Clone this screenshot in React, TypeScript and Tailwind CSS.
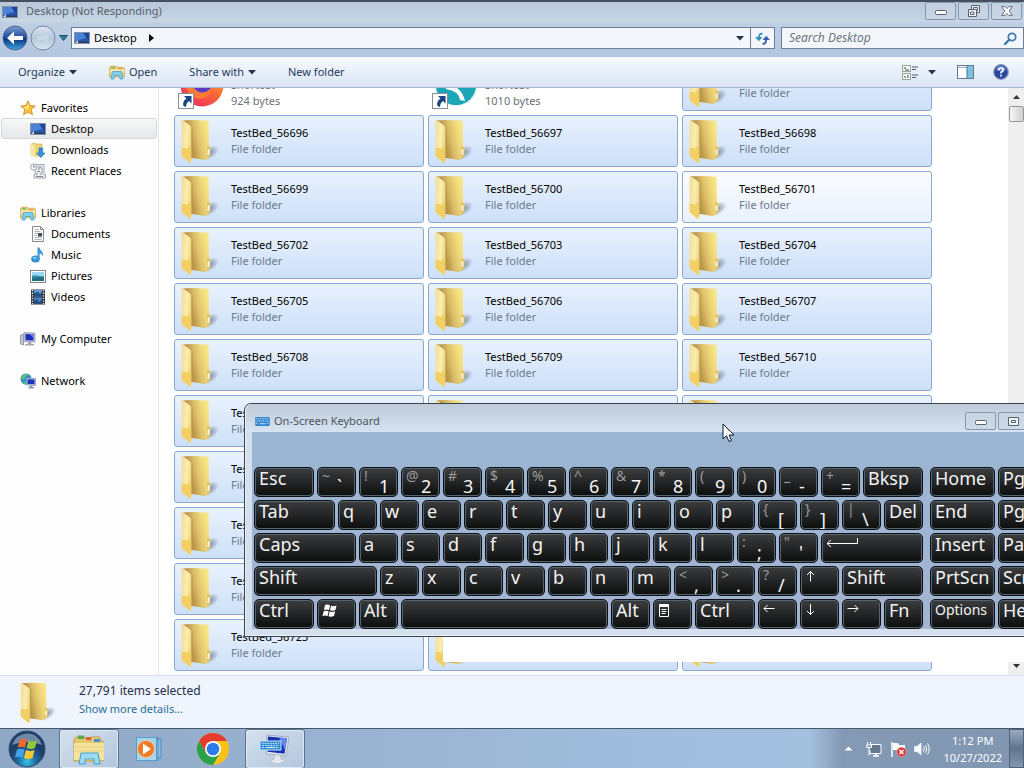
import React from 'react';
import clsx from 'clsx';

interface KeyDef {
  id: string;
  span: string;
  label?: string;
  shift?: string;
  icon?: React.ReactNode;
}

/* ---------- icons ---------- */

function MonitorIcon() {
  return (
    <svg width="16" height="16" viewBox="0 0 16 16" className="shrink-0">
      <rect x="0.5" y="2.5" width="15" height="11" fill="#2858b0" stroke="#8494ad" />
      <path d="M1 3h14v4L1 11z" fill="#4d83d6" />
      <path d="M9 3h6v8z" fill="#1d449a" />
      <path d="M1 11.5h14V13H1z" fill="#2b3c5c" />
      <path d="M1 13l3-3v3z" fill="#d6e2f2" />
    </svg>
  );
}

function StarIcon() {
  return (
    <svg width="16" height="16" viewBox="0 0 16 16" className="shrink-0">
      <path
        d="M8 .8l2 4.8 5.2.4-4 3.500 1.300 5.200L8 11.900l-4.500 2.800 1.300-5.200-4-3.500L6 5.600z"
        fill="#fcc23c"
        stroke="#d98a2b"
        strokeWidth="0.9"
      />
      <path d="M8 3l1.200 3.400-2 3-4-2.500L7 6.400z" fill="#ffe98c" />
    </svg>
  );
}

function DownloadsIcon() {
  return (
    <svg width="16" height="16" viewBox="0 0 16 16" className="shrink-0">
      <path d="M1 2l4-1 1 1h6v12H5l-4-1z" fill="#efd178" stroke="#d0a94c" strokeWidth="0.6" />
      <path d="M1 2l4 1.500V15l-4-2z" fill="#f9e7a6" />
      <path d="M9 6h3.600v5H15l-4.200 4.600L6.600 11H9z" fill="#2f93dc" stroke="#1b6db2" strokeWidth="0.6" />
    </svg>
  );
}

function RecentIcon() {
  return (
    <svg width="16" height="16" viewBox="0 0 16 16" className="shrink-0">
      <path d="M5 1.500h9v10h1.500V15H4v-3h1z" fill="#e9edf0" stroke="#8c959c" strokeWidth="0.8" />
      <path d="M8 4h4M8 6h2M11 6h2M7 8.500h3M11 9h2M6 11h2M10 11h2M6 13.500h7" stroke="#7f8a92" />
      <circle cx="3.800" cy="4" r="3.200" fill="#f5f7f8" stroke="#8c959c" strokeWidth="0.8" />
      <path d="M3.800 2v2h1.700" stroke="#59636a" strokeWidth="0.8" fill="none" />
    </svg>
  );
}

function LibraryIcon() {
  return (
    <svg width="16" height="16" viewBox="0 0 16 16" className="shrink-0">
      <path d="M.5 3.500L2 2h5l1 1.200h6.500L15.500 5v8H.5z" fill="#ecd27c" stroke="#c9a657" strokeWidth="0.7" />
      <path d="M2 3h4v1.500H2z" fill="#7cbf5b" />
      <path d="M9 4h4v1.200H9z" fill="#e88f55" />
      <path d="M.8 5.500h14.400v3H.8z" fill="#f8e9ab" />
      <path d="M2 15l1.500-7.500h9L14 15h-3l-.5-3.500h-5L5 15z" fill="#7fd0ea" stroke="#3d9cc4" strokeWidth="0.7" />
    </svg>
  );
}

function DocumentIcon() {
  return (
    <svg width="16" height="16" viewBox="0 0 16 16" className="shrink-0">
      <path d="M2.500.5h8l3 3v12h-11z" fill="#fbfbfb" stroke="#868d92" />
      <path d="M10.500.5v3h3" fill="none" stroke="#868d92" />
      <path d="M4.500 3.500h4M4.500 5.500h6M4.500 7.500h3M4.500 9.500h3M4.500 11.500h7M4.500 13.500h7" stroke="#9ca3a8" strokeWidth="0.8" />
      <rect x="8" y="7" width="4" height="3.500" fill="#454e55" />
    </svg>
  );
}

function MusicIcon() {
  return (
    <svg width="16" height="16" viewBox="0 0 16 16" className="shrink-0">
      <ellipse cx="5.500" cy="12" rx="4.300" ry="3.600" fill="#3093d6" />
      <ellipse cx="4.800" cy="11" rx="2" ry="1.300" fill="#7cc4f1" />
      <path d="M7.500 12V.5h2C10 4 14 4.500 13 10c-.4-2.200-1.500-3.300-3.400-3.600V12z" fill="#3a97d8" />
    </svg>
  );
}

function PicturesIcon() {
  return (
    <svg width="16" height="16" viewBox="0 0 16 16" className="shrink-0">
      <rect x="0.5" y="2.5" width="15" height="12" fill="#fff" stroke="#7c868d" />
      <rect x="2" y="4" width="12" height="9" fill="#9bd6f1" />
      <path d="M2 8c4-1.500 7 1 12 0v5H2z" fill="#2f8c9c" />
      <path d="M2 10c4 1 8-1.500 12 0v3H2z" fill="#206c80" />
    </svg>
  );
}

function VideosIcon() {
  return (
    <svg width="16" height="16" viewBox="0 0 16 16" className="shrink-0">
      <rect x="1" y="0.500" width="14" height="15" fill="#2c3238" />
      <path d="M2.500 1v14M13.500 1v14" stroke="#e8ecef" strokeWidth="1.400" strokeDasharray="1.300 1.300" />
      <rect x="4" y="1" width="8" height="6.500" fill="#5f9bd4" />
      <rect x="4" y="8.500" width="8" height="6.500" fill="#4b86c4" />
      <path d="M4 4l4-1 2 2 2-2v4.500H4zM4 12l3-2 2 3 3-3v5H4z" fill="#25507f" />
    </svg>
  );
}

function ComputerIcon() {
  return (
    <svg width="16" height="16" viewBox="0 0 16 16" className="shrink-0">
      <path d="M.5 4l3-1v11l-3-1z" fill="#c3c7cf" stroke="#7b818b" strokeWidth="0.7" />
      <path d="M4 1.500l11 .5v9L4 10.500z" fill="#c6cad8" stroke="#878da3" strokeWidth="0.700" />
      <path d="M5.500 3l8 .3v6.200l-8-.3z" fill="#1a2ebc" />
      <path d="M10 3.200l3.500.1v4z" fill="#6f86ef" />
      <path d="M8 11h3l.5 2H14v1.500H5V13h2.700z" fill="#a5a9b5" />
    </svg>
  );
}

function NetworkIcon() {
  return (
    <svg width="16" height="16" viewBox="0 0 16 16" className="shrink-0">
      <circle cx="6" cy="6" r="5.500" fill="#2f8bd0" />
      <path d="M2 3c2-2 5-2.500 6-2 0 2-3 2-3 4S2 7 1 5zM3 8l3 1v2.400C4 11 3 10 3 8z" fill="#5cc06c" />
      <path d="M6.500 5l9 .5v7l-9-.5z" fill="#ccd2e0" stroke="#7c88a8" strokeWidth="0.700" />
      <path d="M7.500 6.200l7 .3v4.800l-7-.3z" fill="#1a35bd" />
      <path d="M10 12.500h2l.5 1.500h1.500v1.500H8.500V14H10z" fill="#8d97ad" />
    </svg>
  );
}

function FolderIcon({ size = 'tile' }: { size?: 'tile' | 'details' }) {
  return (
    <svg
      width={size === 'tile' ? 40 : 38}
      height={size === 'tile' ? 46 : 43}
      viewBox="0 0 40 46"
      className="shrink-0"
    >
      <defs>
        <linearGradient id={`back-${size}`} gradientUnits="userSpaceOnUse" x1="11" x2="29" y1="24" y2="20">
          <stop offset="0" stopColor="#b8964a" />
          <stop offset="0.350" stopColor="#dbbc66" />
          <stop offset="0.700" stopColor="#eed57a" />
          <stop offset="1" stopColor="#f6e583" />
        </linearGradient>
        <linearGradient id={`front-${size}`} x1="0" x2="1" y2="0.300">
          <stop offset="0" stopColor="#f0dc93" />
          <stop offset="0.600" stopColor="#faedb2" />
          <stop offset="1" stopColor="#eed577" />
        </linearGradient>
        <radialGradient id={`shade-${size}`}>
          <stop offset="0" stopColor="#54606f" stopOpacity="0.700" />
          <stop offset="1" stopColor="#54606f" stopOpacity="0" />
        </radialGradient>
      </defs>
      <ellipse cx="29" cy="35" rx="11" ry="6" fill={`url(#shade-${size})`} transform="rotate(-30 29 35)" />
      <path d="M3 2.500l8-.5 16 .5q1.500 0 1.500 1.500l.5 23-1 13.500-3 1.500-13-2z" fill={`url(#back-${size})`} />
      <path d="M27 28q3.500 0 3.500 3v5q0 3-3.500 4z" fill="#e6c65f" />
      <path d="M28.500 31.500v5" stroke="#fff" strokeWidth="1.600" />
      <path d="M1.500 3q0-1.500 2-.7l7.500 5.200q.8.700.8 2V40l-1.500 5-7.300-5.500q-1.500-1-1.500-3z" fill={`url(#front-${size})`} />
      <path d="M1.500 30q4-1 5 1l4-3 1.300 2v10l-1.500 5-7.300-5.500q-1.500-1-1.500-3z" fill="#f1cf66" />
      <path d="M3.500 2.300l7.500 5.200q.8.700.8 2V40" fill="none" stroke="#a98b42" strokeWidth="0.700" />
    </svg>
  );
}

function ShortcutArrow() {
  return (
    <g>
      <rect x="0.500" y="28.500" width="15" height="15" fill="#fff" stroke="#8a8f96" />
      <path d="M6 31h7.500v7.500L11 36q-3 2-3 6l-2.500-1q-1.500-4.500 3-7.500z" fill="#1b4385" />
    </g>
  );
}

function FirefoxIcon() {
  return (
    <svg width="46" height="44" viewBox="0 0 46 44" className="mt-1 shrink-0">
      <defs>
        <linearGradient id="firefox" x1="0.900" x2="0.200" y2="1">
          <stop offset="0" stopColor="#fcca3f" />
          <stop offset="0.500" stopColor="#fb6a35" />
          <stop offset="1" stopColor="#ec2a60" />
        </linearGradient>
      </defs>
      <circle cx="24" cy="20" r="21.500" fill="url(#firefox)" />
      <circle cx="24" cy="19" r="10" fill="#5b3ac4" />
      <path d="M7 20q6 3 8 2 9 11 19 0-2 12-12 12T7 20z" fill="#fb7a35" />
      <ShortcutArrow />
    </svg>
  );
}

function AppIcon() {
  return (
    <svg width="46" height="44" viewBox="0 0 46 44" className="mt-1 shrink-0">
      <circle cx="24" cy="20" r="21.500" fill="#dcefF0" />
      <circle cx="24" cy="20" r="20" fill="#1ba6b5" />
      <path d="M14 18q16 4 19 18l-5-1q-1-9-14-11z" fill="#fff" />
      <ShortcutArrow />
    </svg>
  );
}

function OskIcon() {
  return (
    <svg width="15" height="9" viewBox="0 0 16 10" className="mt-[6px] shrink-0">
      <rect width="16" height="10" fill="#2f86cf" />
      <path d="M1 2h14M1.500 4.500h13M1 7h2M13 7h2" stroke="#d8ecfb" strokeDasharray="1.300 1" strokeWidth="1.200" />
      <path d="M4.500 7.500h7" stroke="#d8ecfb" />
    </svg>
  );
}

function MinimizeIcon() {
  return (
    <svg width="12" height="6" viewBox="0 0 12 6" className="mt-1">
      <rect x="0.5" y="0.5" width="11" height="4" rx="1" fill="#f7f9fb" stroke="#566270" />
    </svg>
  );
}

function RestoreIcon() {
  return (
    <svg width="12" height="12" viewBox="0 0 12 12" fill="#eef3f8" stroke="#566270">
      <path d="M3.500.5h8v7h-8z" />
      <path d="M5.500 2.500h4v3h-4z" />
      <path d="M.5 4.500h8v7h-8z" />
      <path d="M2.500 7h3.500v2.500H2.500z" />
    </svg>
  );
}

function MaximizeIcon() {
  return (
    <svg width="11" height="9" viewBox="0 0 11 9" fill="#eef3f8" stroke="#566270">
      <path d="M.5.5h10v8H.5z" />
      <path d="M3.500 3.500h4v2h-4z" />
    </svg>
  );
}

function CloseIcon() {
  return (
    <svg width="12" height="10" viewBox="0 0 12 10">
      <path
        d="M.7.600h3.500L6 2.600 7.800.600h3.500L8.200 5l3.100 4.400H7.800L6 7.400 4.200 9.400H.7L3.800 5z"
        fill="#fff"
        stroke="#566270"
        strokeWidth="0.900"
      />
    </svg>
  );
}

function DownArrow() {
  return (
    <svg width="8" height="5" viewBox="0 0 8 5" className="shrink-0">
      <path d="M0 0h8L4 4.500z" fill="#25324a" />
    </svg>
  );
}

function WindowsFlag() {
  return (
    <svg width="16" height="14" viewBox="0 0 16 14" fill="#fff">
      <path d="M3 1q2.500-1 5 .3L7 6Q4.500 5 2 6zM9 1.700q2.500 1 5.500-.2L13.500 6Q11 7.200 8 6.300zM1.700 7.200Q4.200 6.200 6.700 7.200L5.600 12Q3 10.800.5 12zM7.700 7.500q2.500 1 5.500-.2L12 12q-3 1.300-5.500.3z" />
    </svg>
  );
}

function MenuKeyIcon() {
  return (
    <svg width="12" height="14" viewBox="0 0 12 14" fill="none" stroke="#fff">
      <path d="M1.500 .500h9v12h-9z" />
      <path d="M1 2h10" strokeWidth="2" />
      <path d="M3.500 5.500h5M3.500 7.500h5M3.500 9.500h4" />
    </svg>
  );
}

function ArrowIcon({ d, wide }: { d: string; wide?: boolean }) {
  return (
    <svg width={wide ? 32 : 12} height="12" viewBox={wide ? '0 0 32 12' : '0 0 12 12'} fill="none" stroke="#fff">
      <path d={d} />
    </svg>
  );
}

/* ---------- data ---------- */

const favorites = [
  { name: 'Desktop', icon: <MonitorIcon />, active: true },
  { name: 'Downloads', icon: <DownloadsIcon /> },
  { name: 'Recent Places', icon: <RecentIcon /> },
];

const libraries = [
  { name: 'Documents', icon: <DocumentIcon /> },
  { name: 'Music', icon: <MusicIcon /> },
  { name: 'Pictures', icon: <PicturesIcon /> },
  { name: 'Videos', icon: <VideosIcon /> },
];

const folders = Array.from({ length: 31 }, (_, i) => `TestBed_${56695 + i}`);

const one = 'col-span-2';

const chars = (pairs: string[]): KeyDef[] =>
  pairs.map((p) => ({
    id: p,
    span: one,
    label: p[p.length - 1],
    shift: p.length > 1 ? p[0] : undefined,
  }));

const mainKeys: KeyDef[] = [
  { id: 'esc', label: 'Esc', span: 'col-span-3' },
  ...chars(['~`', '!1', '@2', '#3', '$4', '%5', '^6', '&7', '*8', '(9', ')0', '_-', '+=']),
  { id: 'bksp', label: 'Bksp', span: 'col-span-3' },
  { id: 'tab', label: 'Tab', span: 'col-span-4' },
  ...chars(['q', 'w', 'e', 'r', 't', 'y', 'u', 'i', 'o', 'p', '{[', '}]', '|\\']),
  { id: 'del', label: 'Del', span: one },
  { id: 'caps', label: 'Caps', span: 'col-span-5' },
  ...chars(['a', 's', 'd', 'f', 'g', 'h', 'j', 'k', 'l', ':;', '"\'']),
  { id: 'enter', icon: <ArrowIcon wide d="M1 5.500h30.500V0M5 2L1 5.500 5 9" />, span: 'col-span-5' },
  { id: 'lshift', label: 'Shift', span: 'col-span-6' },
  ...chars(['z', 'x', 'c', 'v', 'b', 'n', 'm', '<,', '>.', '?/']),
  { id: 'up', icon: <ArrowIcon d="M5.500 0v10.500M2 4L5.500.500 9 4" />, span: one },
  { id: 'rshift', label: 'Shift', span: 'col-span-4' },
  { id: 'lctrl', label: 'Ctrl', span: 'col-span-3' },
  { id: 'win', icon: <WindowsFlag />, span: one },
  { id: 'lalt', label: 'Alt', span: one },
  { id: 'space', label: '', span: 'col-span-10' },
  { id: 'ralt', label: 'Alt', span: one },
  { id: 'menu', icon: <MenuKeyIcon />, span: one },
  { id: 'rctrl', label: 'Ctrl', span: 'col-span-3' },
  { id: 'left', icon: <ArrowIcon d="M11.500 4.500H1M4.500 1L1 4.500 4.500 8" />, span: one },
  { id: 'down', icon: <ArrowIcon d="M5.500 0v10.500M2 7l3.500 3.500L9 7" />, span: one },
  { id: 'right', icon: <ArrowIcon d="M.5 4.500H11M7.500 1L11 4.500 7.500 8" />, span: one },
  { id: 'fn', label: 'Fn', span: one },
];

const sideKeys = ['Home', 'PgUp', 'End', 'PgDn', 'Insert', 'Pause', 'PrtScn', 'ScrLk', 'Options', 'Help'];

/* ---------- pieces ---------- */

function CaptionButton({ label, children }: { label: string; children: React.ReactNode }) {
  return (
    <button
      aria-label={label}
      className="flex h-[18px] w-[31px] items-center justify-center rounded-[2px] border border-[#8497ae] bg-[#c9d6e5]/60"
    >
      {children}
    </button>
  );
}

function NavRow({ name, icon, child, active }: { name: string; icon: React.ReactNode; child?: boolean; active?: boolean }) {
  return (
    <a
      href="#"
      className={clsx(
        'mx-px flex h-[21px] items-center gap-[5px] rounded-[3px] border text-black',
        child ? 'pl-7' : 'pl-[18px]',
        active ? 'border-[#d6d8da] bg-linear-to-b from-[#f7f8f8] to-[#e6e7e8]' : 'border-transparent'
      )}
    >
      {icon}
      {name}
    </a>
  );
}

function FolderTile({ name, light }: { name: string; light?: boolean }) {
  return (
    <div
      className={clsx(
        'flex h-[52px] items-center gap-[11px] rounded-[3px] border bg-linear-to-b pl-[5px]',
        light ? 'border-[#8eaacd] from-[#fafcff] to-[#e9f1fc]' : 'border-[#86a8d3] from-[#e9f1fc] to-[#cde0fa]'
      )}
    >
      <FolderIcon />
      <div className="flex flex-col">
        <span className="text-black">{name}</span>
        <span className="text-[#6b7a8d]">File folder</span>
      </div>
    </div>
  );
}

function ShortcutTile({ icon, size }: { icon: React.ReactNode; size: string }) {
  return (
    <div className="flex h-[52px] items-center gap-[7px] pl-1">
      {icon}
      <div className="flex flex-col pt-4 text-[#6d7278]">
        <span>Shortcut</span>
        <span>{size}</span>
      </div>
    </div>
  );
}

function Key({ k }: { k: KeyDef }) {
  return (
    <button
      aria-label={k.id}
      className={clsx(
        'flex h-[30px] overflow-hidden rounded-[5px] border border-[#0c1116] bg-linear-to-b from-[#3b3d3e] via-[#242526] to-[#0c0d0d] pl-1 text-left text-[18px] leading-5 text-[#f4f4f4] shadow-[inset_0_0_0_1px_#56646e]',
        k.span
      )}
    >
      {k.icon && <span className="pt-1">{k.icon}</span>}
      {k.shift && <span className="w-[15px] shrink-0 text-[14px] leading-4 text-[#9b9b9b]">{k.shift}</span>}
      {k.label && <span className={clsx(k.shift && 'self-end')}>{k.label}</span>}
    </button>
  );
}

function OnScreenKeyboard() {
  return (
    <section
      aria-label="On-Screen Keyboard"
      className="absolute top-[403px] left-[244px] w-max rounded-t-[7px] border border-[#39434f] bg-[#d5e0ee] px-[7px] pb-[7px] shadow-[inset_0_0_0_1px_#e8f2fa]"
    >
      <header className="-mx-[6px] flex h-7 items-center gap-1 rounded-t-[6px] bg-linear-to-b from-[#bfcbd8] to-[#d6e3f0] pl-[9px] text-[#4b5663]">
        <OskIcon />
        <h2 className="pt-[6px]">On-Screen Keyboard</h2>
        <div className="ml-auto flex gap-[2px] pt-[6px] pr-[9px]">
          <CaptionButton label="Minimize keyboard"><MinimizeIcon /></CaptionButton>
          <CaptionButton label="Maximize keyboard"><MaximizeIcon /></CaptionButton>
          <CaptionButton label="Close keyboard"><CloseIcon /></CaptionButton>
        </div>
      </header>
      <div className="flex gap-[7px] bg-linear-to-b from-[#9ab5d3] to-[#a4b4d2] px-[2px] pt-[35px]">
        <div className="grid grid-cols-[repeat(32,18px)] gap-[3px]">
          {mainKeys.map((k) => (
            <Key key={k.id} k={k} />
          ))}
        </div>
        <div className="grid grid-cols-[65px_65px] gap-[3px]">
          {sideKeys.map((label) => (
            <button
              key={label}
              className={clsx(
                'flex h-[30px] overflow-hidden rounded-[5px] border border-[#0c1116] bg-linear-to-b from-[#3b3d3e] via-[#242526] to-[#0c0d0d] pl-1 leading-5 text-[#f4f4f4] shadow-[inset_0_0_0_1px_#56646e]',
                label === 'Options' ? 'text-[14px]' : 'text-[18px]'
              )}
            >
              {label}
            </button>
          ))}
        </div>
      </div>
    </section>
  );
}

function TaskButton({ label, active, children }: { label: string; active?: boolean; children: React.ReactNode }) {
  return (
    <button
      aria-label={label}
      className={clsx(
        'flex h-10 w-[60px] items-center justify-center rounded-[3px] border',
        active ? 'border-[#5d728c] bg-linear-to-br from-[#d5e1ee] to-[#b2c6dd] shadow-[inset_0_0_0_1px_#dce8f4]' : 'border-transparent'
      )}
    >
      {children}
    </button>
  );
}

function Taskbar() {
  return (
    <footer className="flex h-10 shrink-0 items-center border-t border-[#46566b] bg-linear-to-r from-[#8fa8c6] via-[#a3bfdf] via-70% to-[#a6c1df]">
      <button aria-label="Start" className="flex w-[59px] justify-start pl-2">
        <svg width="38" height="38" viewBox="0 0 38 38">
          <defs>
            <radialGradient id="orb" cy="0.850">
              <stop offset="0" stopColor="#35c4e6" />
              <stop offset="0.550" stopColor="#1f629b" />
              <stop offset="1" stopColor="#1b3d66" />
            </radialGradient>
          </defs>
          <circle cx="19" cy="19" r="18" fill="url(#orb)" stroke="#34506f" />
          <path d="M4 15Q8 4 19 3.500T34 15q-15-6-30 0z" fill="#b4cadd" opacity="0.550" />
          <path d="M12 10q3-2 7-.5l-2 8q-3.500-1.500-7.500 0z" fill="#ef6a2c" />
          <path d="M20.500 10.500q4 2 8.500-.5l-2 8q-4 2-8.500 0z" fill="#90c73e" />
          <path d="M9 19.500q4-1.500 7.500 0l-2 8q-3.500-1.500-7.500 0z" fill="#45a4e6" />
          <path d="M18 20q4 2 8.500 0l-2 8q-4 2-8.500 0z" fill="#fbc62f" />
        </svg>
      </button>
      <TaskButton label="File Explorer" active>
        <svg width="34" height="32" viewBox="0 0 34 32">
          <path d="M4 4h9l2 3h4V4h9v4h3v20H2V7z" fill="#e4c96c" stroke="#c19f4a" />
          <path d="M6 2.500h6V6H6z" fill="#5aa850" />
          <path d="M14 4h5v3h-5z" fill="#d95f46" />
          <path d="M22 6h6v3h-6z" fill="#4b8fd0" />
          <path d="M2 10h30v17H2z" fill="#f5e49c" />
          <path d="M2 14h30M2 18h30" stroke="#e6cf7c" />
          <path d="M7 31l2-11h17l2 11h-6v-5h-9v5z" fill="#9cd9f2" stroke="#479fcb" />
        </svg>
      </TaskButton>
      <TaskButton label="Media Player">
        <svg width="28" height="26" viewBox="0 0 28 26">
          <path d="M11 1.500h12v23H11zM13 3h13v19H13z" fill="#8fc0e4" stroke="#4c8dc2" />
          <path d="M1.500 1.500h20v23h-20z" fill="#a7d3ef" stroke="#5a9bcb" />
          <circle cx="11" cy="13" r="8.500" fill="#ee7a26" stroke="#f9c79a" />
          <path d="M8 7.500l8 5.500-8 5.500z" fill="#fff" />
        </svg>
      </TaskButton>
      <div className="pl-1">
        <TaskButton label="Chrome">
          <svg width="34" height="34" viewBox="0 0 34 34">
            <circle cx="17" cy="17" r="16" fill="#fbc116" />
            <path d="M3.140 9A16 16 0 0 0 17 33l7-12-7-1-7 1z" fill="#2aa14b" />
            <path d="M17 17v-8h13.860A16 16 0 0 0 3.140 9L10 21z" fill="#e33b2e" />
            <circle cx="17" cy="17" r="8" fill="#fff" />
            <circle cx="17" cy="17" r="6.300" fill="#2c7bea" />
          </svg>
        </TaskButton>
      </div>
      <div className="pl-[2px]">
        <TaskButton label="Keyboard" active>
          <svg width="32" height="32" viewBox="0 0 32 32">
            <path d="M8 2l22 2-3 19-20-2z" fill="#e0e6ef" stroke="#a2adbd" />
            <path d="M9 3.500l19 1.800-2.500 15.500-17-2z" fill="#1730b4" />
            <path d="M20 4.500l8 .8-2 12z" fill="#6289ea" />
            <path d="M15 22h6l1 4 5 2-8 3-9-2 5-3z" fill="#e4e8ed" stroke="#adb6c1" strokeWidth="0.700" />
            <rect x="1" y="8" width="21" height="9" fill="#338fd6" stroke="#cbe6f9" />
            <path d="M3 10.500h17M3.500 12.500h16M3 14.500h3M17 14.500h3" stroke="#dff1fd" strokeDasharray="1.500 1.200" />
            <path d="M7 14.500h9" stroke="#dff1fd" />
          </svg>
        </TaskButton>
      </div>
      <div className="ml-auto flex h-full items-center bg-linear-to-r from-transparent via-[#8499b4] via-15% to-[#8096b1] pl-[34px] text-white">
        <button aria-label="Show hidden icons" className="mr-3">
          <svg width="9" height="5" viewBox="0 0 9 5"><path d="M.5 4.500L4.500.5l4 4z" fill="#fff" /></svg>
        </button>
        <svg width="18" height="16" viewBox="0 0 18 16" className="mr-[7px]" fill="none" stroke="#fff">
          <path d="M6 3.500h10v9H5V9" fill="#64788f" />
          <path d="M8 15h6M11 12.500V15" strokeWidth="1.500" />
          <path d="M2.500 1v3M5.500 1v3M1.500 4h5v2.500h-5zM4 7v7.500" />
        </svg>
        <svg width="18" height="16" viewBox="0 0 18 16" className="mr-[5px]">
          <path d="M2 1v15" stroke="#fff" strokeWidth="1.500" />
          <path d="M3 2h5l1 2h6v7H9L8 9H3z" fill="#fff" />
          <circle cx="11.500" cy="11" r="4.800" fill="#d8393a" stroke="#f3b5b5" strokeWidth="0.600" />
          <path d="M9.500 9l4 4M13.500 9l-4 4" stroke="#fff" strokeWidth="1.500" />
        </svg>
        <svg width="18" height="16" viewBox="0 0 18 16" className="mr-3">
          <path d="M1.500 5.500H4L8 2v12l-4-3.500H1.500z" fill="#fff" stroke="#e6edf5" />
          <path d="M10.500 5.500q1.500 2.500 0 5M12.500 4q2.500 4 0 8M14.500 2.500q3.500 5.500 0 11" fill="none" stroke="#fff" />
        </svg>
        <div className="text-center leading-[17px]">
          <div>1:12 PM</div>
          <div>10/27/2022</div>
        </div>
        <button aria-label="Show desktop" className="ml-[7px] h-full w-[15px] border border-[#4f637c] bg-linear-to-b from-[#9aabc0] via-[#60758e] to-[#8296ae]" />
      </div>
    </footer>
  );
}

export default function App() {
  return (
    <div className="relative flex h-screen flex-col overflow-hidden bg-white font-['Noto_Sans','Open_Sans',sans-serif] text-[11px] leading-4">
      <header className="flex h-[22px] shrink-0 items-center border-t-2 border-[#454f60] bg-linear-to-b from-[#b7c8d8] to-[#c8d6e5] px-[2px] text-[#56606c]">
        <MonitorIcon />
        <h1 className="pb-[2px] pl-2">Desktop (Not Responding)</h1>
        <div className="ml-auto flex gap-[2px] pb-[2px]">
          <CaptionButton label="Minimize"><MinimizeIcon /></CaptionButton>
          <CaptionButton label="Restore"><RestoreIcon /></CaptionButton>
          <CaptionButton label="Close"><CloseIcon /></CaptionButton>
        </div>
      </header>

      <nav className="flex h-[35px] shrink-0 items-center bg-linear-to-b from-[#bfd0e4] to-[#b3c6df] pb-[3px] pl-[2px]">
        <button aria-label="Back">
          <svg width="26" height="26" viewBox="0 0 26 26">
            <defs>
              <linearGradient id="back" x2="0" y2="1">
                <stop offset="0" stopColor="#7c9dd0" />
                <stop offset="0.450" stopColor="#24519f" />
                <stop offset="0.550" stopColor="#0f3682" />
                <stop offset="1" stopColor="#3cabe6" />
              </linearGradient>
            </defs>
            <circle cx="13" cy="13" r="12" fill="url(#back)" stroke="#50648a" />
            <path d="M5 13l7-6.500v4.500h9v4h-9v4.500z" fill="#fff" />
          </svg>
        </button>
        <button aria-label="Forward" className="pl-[2px]">
          <svg width="26" height="26" viewBox="0 0 26 26">
            <defs>
              <linearGradient id="fwd" x2="0" y2="1">
                <stop offset="0" stopColor="#dde7f1" />
                <stop offset="0.500" stopColor="#b3c6da" />
                <stop offset="1" stopColor="#dbe8f4" />
              </linearGradient>
            </defs>
            <circle cx="13" cy="13" r="12" fill="url(#fwd)" stroke="#7787a0" />
            <path d="M20 13l-6-5.500V11H7v4h7v3.500z" fill="#c9d7e5" />
          </svg>
        </button>
        <button aria-label="Recent pages" className="px-[3px]">
          <svg width="9" height="6" viewBox="0 0 9 6"><path d="M.5.5h8L4.500 5.500z" fill="#2d7f9e" stroke="#1f4e72" /></svg>
        </button>
        <div className="flex h-[22px] grow items-center border border-[#68809c] bg-[#f3f7fc] pl-[2px] text-black">
          <MonitorIcon />
          <span className="pl-1">Desktop</span>
          <svg width="5" height="8" viewBox="0 0 5 8" className="ml-3"><path d="M0 0l5 4-5 4z" fill="#000" /></svg>
          <button aria-label="Previous locations" className="mr-[6px] ml-auto"><DownArrow /></button>
          <button aria-label="Refresh" className="flex h-full w-6 items-center justify-center border-l border-[#68809c]">
            <svg width="15" height="13" viewBox="0 0 16 14" fill="none" strokeWidth="2">
              <path d="M8 2Q4 1 4 7" stroke="#3a8fb8" />
              <path d="M0 5.500h8L4 10z" fill="#3a8fb8" />
              <path d="M8 12.500q4 1 4-5" stroke="#3c5fae" />
              <path d="M8 8.500h8L12 4z" fill="#3c5fae" />
            </svg>
          </button>
        </div>
        <div className="ml-[6px] flex h-[22px] w-[243px] items-center border border-[#68809c] bg-[#f3f7fc] pr-[6px] pl-[7px]">
          <input aria-label="Search Desktop" placeholder="Search Desktop" className="min-w-0 grow text-[12px] italic outline-none placeholder:text-[#6d757e]" />
          <svg width="13" height="13" viewBox="0 0 13 13" fill="none">
            <circle cx="8" cy="5" r="3.700" stroke="#3f7db5" strokeWidth="1.800" />
            <path d="M5.200 7.800L1 12" stroke="#3c6fa4" strokeWidth="2.200" strokeLinecap="round" />
          </svg>
        </div>
      </nav>

      <div className="flex h-[31px] shrink-0 items-center gap-8 border-b border-[#a4b6cd] bg-linear-to-b from-[#f8fbfe] via-[#e7eff9] via-50% to-[#dae5f4] pr-[15px] pl-[18px] text-[#1e395b]">
        <button className="flex items-center gap-1">Organize <DownArrow /></button>
        <button className="flex items-center gap-1"><LibraryIcon /> Open</button>
        <button className="flex items-center gap-1">Share with <DownArrow /></button>
        <button>New folder</button>
        <div className="ml-auto flex items-center">
          <button aria-label="Change your view" className="flex items-center gap-[9px]">
            <svg width="17" height="15" viewBox="0 0 17 15">
              <rect x="0.500" y="0.500" width="8" height="6" fill="#f4f6ef" stroke="#98a49a" />
              <rect x="0.500" y="8.500" width="8" height="6" fill="#f4f6ef" stroke="#98a49a" />
              <path d="M2 3h2M3 5h4M2 11l2 2M6 10v3" stroke="#3c4f4a" />
              <path d="M10 2h6M10 4.500h4M10 10h6M10 12.500h4" stroke="#4d5b6c" />
            </svg>
            <DownArrow />
          </button>
          <button aria-label="Show the preview pane" className="pl-[21px]">
            <svg width="17" height="14" viewBox="0 0 17 14">
              <rect x="0.500" y="0.500" width="16" height="13" fill="#fff" stroke="#5f7899" />
              <path d="M1 2.500h15" stroke="#9eb2cb" />
              <rect x="10" y="1" width="6" height="12" fill="#7cc2da" />
              <path d="M10 1v12" stroke="#497796" />
            </svg>
          </button>
          <button aria-label="Get help" className="pl-[19px]">
            <svg width="16" height="16" viewBox="0 0 16 16">
              <circle cx="8" cy="8" r="7.300" fill="#2a479f" stroke="#8a97b7" strokeWidth="1.200" />
              <path d="M3 6q1-4 5-4t5 4q-5 2-10 0z" fill="#6e88cf" />
              <path d="M5.700 6.300Q5.700 4 8 4t2.300 2Q10.300 7.300 8 8.300v1.300M8 10.800v1.700" fill="none" stroke="#fff" strokeWidth="1.700" />
            </svg>
          </button>
        </div>
      </div>

      <main className="flex min-h-0 grow">
        <aside className="flex w-[159px] shrink-0 flex-col gap-[21px] border-r border-[#dfe6ee] bg-[#fdfdfe] pt-[9px]">
          <div>
            <NavRow name="Favorites" icon={<StarIcon />} />
            {favorites.map((f) => (
              <NavRow key={f.name} child {...f} />
            ))}
          </div>
          <div>
            <NavRow name="Libraries" icon={<LibraryIcon />} />
            {libraries.map((l) => (
              <NavRow key={l.name} child {...l} />
            ))}
          </div>
          <NavRow name="My Computer" icon={<ComputerIcon />} />
          <NavRow name="Network" icon={<NetworkIcon />} />
        </aside>

        <div className="flex min-w-0 grow flex-col justify-end overflow-hidden pb-1 pl-[15px]">
          <div className="grid shrink-0 grid-cols-[repeat(auto-fill,250px)] gap-1">
            <ShortcutTile size="924 bytes" icon={<FirefoxIcon />} />
            <ShortcutTile size="1010 bytes" icon={<AppIcon />} />
            {folders.map((name) => (
              <FolderTile key={name} name={name} light={name === 'TestBed_56701'} />
            ))}
          </div>
        </div>

        <div className="flex w-4 shrink-0 flex-col items-center bg-[#efeff0]">
          <button aria-label="Scroll up" className="flex h-[18px] items-center">
            <svg width="7" height="4" viewBox="0 0 7 4"><path d="M0 4l3.500-4L7 4z" fill="#333" /></svg>
          </button>
          <div className="h-4 w-[15px] rounded-[2px] border border-[#979797] bg-linear-to-r from-[#f6f6f6] to-[#cfd0d2]" />
          <button aria-label="Scroll down" className="mt-auto flex h-[18px] items-center">
            <svg width="7" height="4" viewBox="0 0 7 4"><path d="M0 0l3.500 4L7 0z" fill="#333" /></svg>
          </button>
        </div>
      </main>

      <section className="flex h-[53px] shrink-0 items-center border-t border-[#d9e0ea] bg-[#f0f4fc] pl-[19px]">
        <FolderIcon size="details" />
        <div className="flex flex-col pb-1 pl-[22px] leading-[18px]">
          <span className="text-[12px] text-[#1f2f4d]">27,791 items selected</span>
          <a href="#" className="text-[#1f6f96]">Show more details...</a>
        </div>
      </section>

      <Taskbar />

      {/* stale area left unpainted under the dragged keyboard window */}
      <div className="absolute top-[637px] right-0 left-[443px] h-[25px] bg-white" />
      <OnScreenKeyboard />

      <svg width="14" height="21" viewBox="0 0 14 21" className="absolute top-[423px] left-[722px]">
        <path d="M1 1v15l3.500-3.300L7 18.500l2.500-1-2.400-5.500H12z" fill="#fff" stroke="#111a26" />
      </svg>
    </div>
  );
}
